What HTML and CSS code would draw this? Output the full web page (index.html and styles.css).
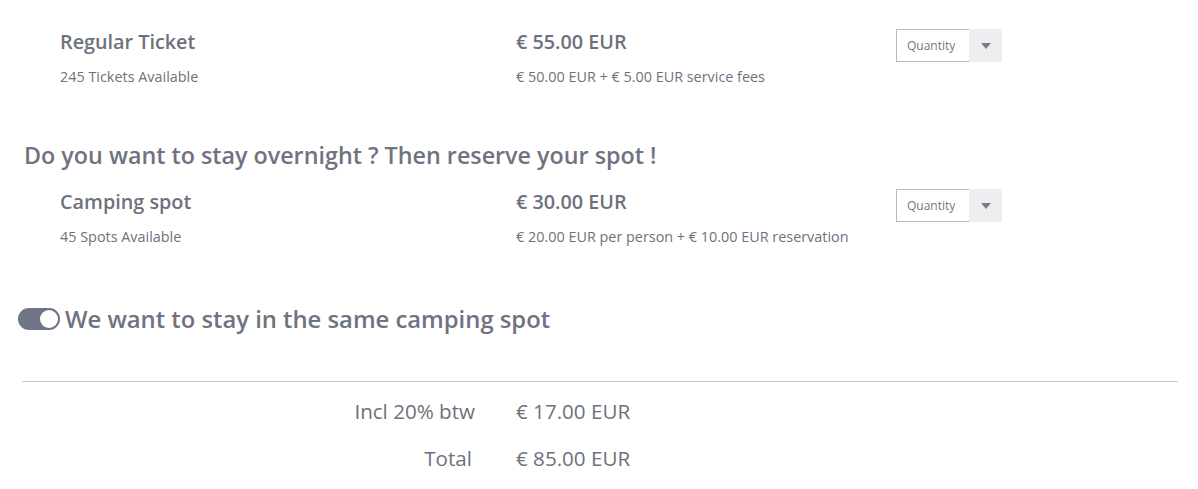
FILE: index.html
```html
<!DOCTYPE html>
<html>
<head>
<meta charset="utf-8">
<link rel="stylesheet" href="styles.css">
</head>
<body>
<div class="page">
  <div class="ticket first">
    <div class="col-name">
      <div class="title">Regular Ticket</div>
      <div class="sub">245 Tickets Available</div>
    </div>
    <div class="col-price">
      <div class="title">€ 55.00 EUR</div>
      <div class="sub">€ 50.00 EUR + € 5.00 EUR service fees</div>
    </div>
    <div class="select">
      <span class="select-label">Quantity</span>
      <span class="select-arrow"><span class="tri"></span></span>
    </div>
  </div>

  <h2 class="heading">Do you want to stay overnight ? Then reserve your spot !</h2>

  <div class="ticket">
    <div class="col-name">
      <div class="title">Camping spot</div>
      <div class="sub">45 Spots Available</div>
    </div>
    <div class="col-price">
      <div class="title">€ 30.00 EUR</div>
      <div class="sub">€ 20.00 EUR per person + € 10.00 EUR reservation</div>
    </div>
    <div class="select">
      <span class="select-label">Quantity</span>
      <span class="select-arrow"><span class="tri"></span></span>
    </div>
  </div>

  <div class="toggle-row">
    <span class="toggle"><span class="knob"></span></span>
    <span class="toggle-text">We want to stay in the same camping spot</span>
  </div>

  <div class="divider"></div>

  <div class="totals">
    <div class="total-row">
      <span class="total-label">Incl 20% btw</span>
      <span class="total-value">€ 17.00 EUR</span>
    </div>
    <div class="total-row second">
      <span class="total-label last">Total</span>
      <span class="total-value">€ 85.00 EUR</span>
    </div>
  </div>
</div>
</body>
</html>
```

FILE: styles.css
```css
html, body {
  margin: 0;
  padding: 0;
  background: #ffffff;
}

body {
  font-family: "Open Sans", "Noto Sans", sans-serif;
  color: #6e717d;
}

.page {
  padding: 0 20px 0 22px;
}

.ticket {
  display: grid;
  grid-template-columns: 456px 380px 106px;
  margin-left: 38px;
}

.ticket.first {
  padding-top: 28px;
}

.title {
  font-size: 19.8px;
  font-weight: 600;
  line-height: 28px;
  height: 28px;
}

.sub {
  font-size: 14.4px;
  line-height: 20px;
  margin-top: 11px;
}

.select {
  display: flex;
  height: 33px;
  margin-top: 1px;
}

.select-label {
  width: 63px;
  border: 1px solid #b9bac0;
  border-right: none;
  font-size: 12px;
  line-height: 31px;
  padding-left: 10px;
  color: #75777f;
  background: #fff;
}

.select-arrow {
  width: 33px;
  background: #eeeef1;
  display: flex;
  align-items: center;
  justify-content: center;
}

.tri {
  width: 0;
  height: 0;
  border-left: 5px solid transparent;
  border-right: 5px solid transparent;
  border-top: 6px solid #7a7c84;
}

.heading {
  margin: 52px 0 17px 2px;
  font-size: 23.3px;
  font-weight: 600;
  line-height: 32px;
  color: #70737f;
}

.toggle-row {
  display: flex;
  align-items: center;
  gap: 5px;
  margin-top: 56px;
  margin-left: -4px;
  height: 32px;
}

.toggle {
  display: inline-flex;
  justify-content: flex-end;
  align-items: center;
  width: 42px;
  height: 22px;
  border-radius: 11px;
  background: #6f7586;
  box-sizing: border-box;
  padding: 2px;
}

.knob {
  width: 18px;
  height: 18px;
  border-radius: 50%;
  background: #ffffff;
}

.toggle-text {
  font-size: 23.8px;
  font-weight: 600;
  line-height: 32px;
  color: #6f7381;
}

.divider {
  height: 1px;
  background: #c8c8cb;
  margin-top: 46px;
}

.totals {
  padding-top: 15px;
}

.total-row {
  display: grid;
  grid-template-columns: 453px auto;
  gap: 41px;
  font-size: 20.6px;
  font-weight: 500;
  line-height: 28px;
}

.total-row.second {
  margin-top: 19px;
}

.total-label {
  text-align: right;
}

.total-label.last {
  padding-right: 3px;
}
```
